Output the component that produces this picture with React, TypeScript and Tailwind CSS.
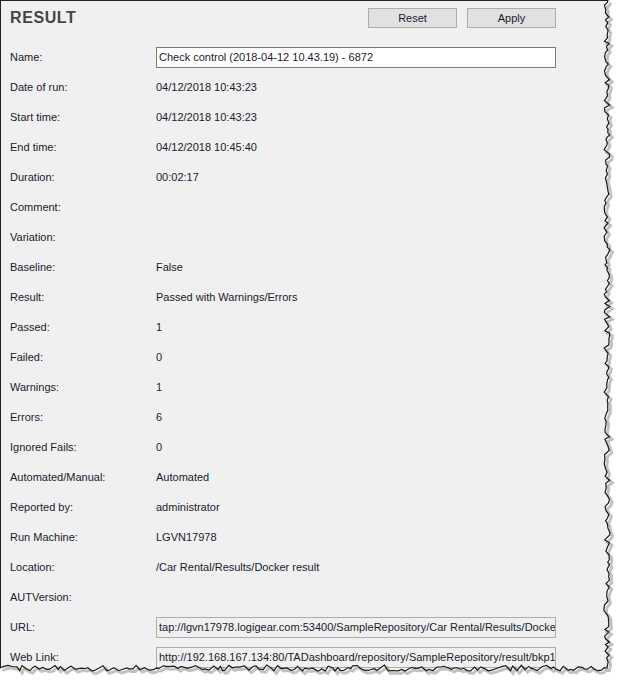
import React from "react";

const rows: { label: string; value?: string; input?: "edit" | "readonly" }[] = [
  { label: "Name:", value: "Check control (2018-04-12 10.43.19) - 6872", input: "edit" },
  { label: "Date of run:", value: "04/12/2018 10:43:23" },
  { label: "Start time:", value: "04/12/2018 10:43:23" },
  { label: "End time:", value: "04/12/2018 10:45:40" },
  { label: "Duration:", value: "00:02:17" },
  { label: "Comment:" },
  { label: "Variation:" },
  { label: "Baseline:", value: "False" },
  { label: "Result:", value: "Passed with Warnings/Errors" },
  { label: "Passed:", value: "1" },
  { label: "Failed:", value: "0" },
  { label: "Warnings:", value: "1" },
  { label: "Errors:", value: "6" },
  { label: "Ignored Fails:", value: "0" },
  { label: "Automated/Manual:", value: "Automated" },
  { label: "Reported by:", value: "administrator" },
  { label: "Run Machine:", value: "LGVN17978" },
  { label: "Location:", value: "/Car Rental/Results/Docker result" },
  { label: "AUTVersion:" },
  { label: "URL:", value: "tap://lgvn17978.logigear.com:53400/SampleRepository/Car Rental/Results/Docker result", input: "readonly" },
  { label: "Web Link:", value: "http://192.168.167.134:80/TADashboard/repository/SampleRepository/result/bkp123", input: "readonly" },
];

// seeded noise so the torn edge is the same every render
function rng(seed: number) {
  return () => {
    seed |= 0;
    seed = (seed + 0x6d2b79f5) | 0;
    let t = Math.imul(seed ^ (seed >>> 15), 1 | seed);
    t = (t + Math.imul(t ^ (t >>> 7), 61 | t)) ^ t;
    return ((t ^ (t >>> 14)) >>> 0) / 4294967296;
  };
}

function tornEdge() {
  const r = rng(17);
  const pts: [number, number][] = [];
  let y = 0;
  while (y < 666) {
    pts.push([607 + (r() - 0.5) * 6, y]);
    y += 2 + r() * 3;
  }
  pts.push([607, 668]);
  let x = 604;
  while (x > 0) {
    pts.push([x, 668 + (r() - 0.5) * 6]);
    x -= 2 + r() * 3;
  }
  pts.push([0, 668]);
  return pts;
}

const edge = tornEdge();
const line = edge.map((p, i) => `${i ? "L" : "M"}${p[0].toFixed(1)} ${p[1].toFixed(1)}`).join(" ");
const outside = `${line} L0 682 L617 682 L617 0 Z`;

function TornEdge() {
  return (
    <svg className="pointer-events-none absolute inset-0" width={617} height={682} viewBox="0 0 617 682">
      <path d={outside} fill="#ffffff" />
      <path d={line} transform="translate(2.5 2.5)" fill="none" stroke="#9a9a9a" strokeWidth={3} strokeOpacity={0.6} />
      <path d={line} fill="none" stroke="#1a1a1a" strokeWidth={1.2} />
    </svg>
  );
}

export default function App() {
  return (
    <div className="relative h-[682px] w-[617px] overflow-hidden bg-white font-['Liberation_Sans',Arial,sans-serif] text-[11px] text-[#1b1b2e]">
      <div className="h-full w-full border-l border-t border-[#222] bg-[#f0f0f0] pl-[9px] pt-[7px]">
        <div className="flex h-[20px] w-[546px] items-center justify-between">
          <span className="text-[16px] font-bold tracking-[0.6px] text-[#454545]">RESULT</span>
          <div className="flex gap-[10px]">
            <button className="h-[20px] w-[89px] border border-[#adadad] bg-[#e1e1e1] text-[#1b1b2e]">Reset</button>
            <button className="h-[20px] w-[89px] border border-[#adadad] bg-[#e1e1e1] text-[#1b1b2e]">Apply</button>
          </div>
        </div>
        <div className="mt-[14px] flex flex-col">
          {rows.map((row) => (
            <div key={row.label} className="flex h-[30px] items-center">
              <span className="w-[146px] shrink-0">{row.label}</span>
              {row.input ? (
                <div
                  className={
                    row.input === "edit"
                      ? "flex h-[21px] w-[400px] items-center overflow-hidden whitespace-nowrap border border-[#7a7a7a] bg-white px-[2px]"
                      : "flex h-[21px] w-[400px] items-center overflow-hidden whitespace-nowrap border border-[#adadad] bg-[#f0f0f0] px-[2px]"
                  }
                >
                  {row.value}
                </div>
              ) : (
                <span>{row.value}</span>
              )}
            </div>
          ))}
        </div>
      </div>
      <TornEdge />
    </div>
  );
}
